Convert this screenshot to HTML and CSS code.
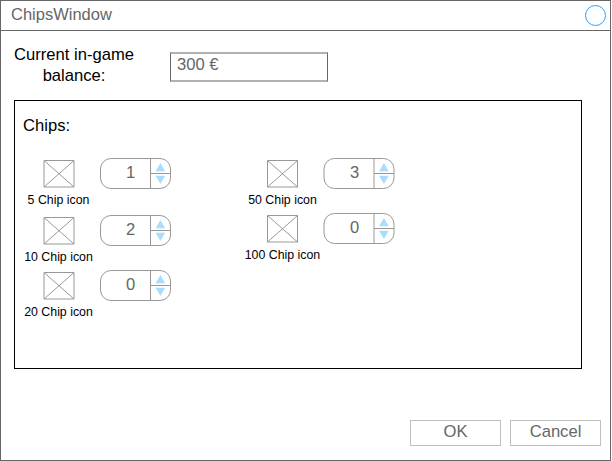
FILE: index.html
```html
<!DOCTYPE html>
<html lang="en">
<head>
<meta charset="utf-8">
<title>ChipsWindow</title>
<link rel="stylesheet" href="styles.css">
</head>
<body>
<svg class="defs" aria-hidden="true">
  <defs>
    <path id="image" d="M1 .5h30v26.500h-30zM1 .5l30 26.500M31 .5L1 27" fill="none" stroke="#999"/>
    <g id="frame">
      <rect x=".5" y=".5" width="70" height="30" rx="10.500" fill="#fff" stroke="#999"/>
      <path d="M50.500 .5v30M50.500 15.500h20" fill="none" stroke="#999"/>
      <path d="M60.400 5l4.800 8.300h-9.600zM60.400 26l4.800-8.300h-9.600z" fill="#aadcff"/>
    </g>
  </defs>
</svg>
<main class="window">
  <header class="titlebar">
    <h1 class="title">ChipsWindow</h1>
    <span class="close"></span>
  </header>
  <section class="balance">
    <label class="balance-label">Current in-game balance:</label>
    <div class="balance-field">300 €</div>
  </section>
  <section class="panel">
    <h2 class="heading">Chips:</h2>
    <div class="columns">
      <div class="column">
        <div class="chip first">
          <div class="picture"><svg class="image"><use href="#image"/></svg><span class="caption">5 Chip icon</span></div>
          <div class="spinner"><svg class="frame"><use href="#frame"/></svg><span class="value">1</span></div>
        </div>
        <div class="chip">
          <div class="picture"><svg class="image"><use href="#image"/></svg><span class="caption">10 Chip icon</span></div>
          <div class="spinner"><svg class="frame"><use href="#frame"/></svg><span class="value">2</span></div>
        </div>
        <div class="chip">
          <div class="picture"><svg class="image"><use href="#image"/></svg><span class="caption">20 Chip icon</span></div>
          <div class="spinner"><svg class="frame"><use href="#frame"/></svg><span class="value">0</span></div>
        </div>
      </div>
      <div class="column">
        <div class="chip">
          <div class="picture"><svg class="image"><use href="#image" x="-.5"/></svg><span class="caption">50 Chip icon</span></div>
          <div class="spinner"><svg class="frame"><use href="#frame" x="-.5"/></svg><span class="value">3</span></div>
        </div>
        <div class="chip">
          <div class="picture"><svg class="image"><use href="#image" x="-.5"/></svg><span class="caption">100 Chip icon</span></div>
          <div class="spinner"><svg class="frame"><use href="#frame" x="-.5"/></svg><span class="value">0</span></div>
        </div>
      </div>
    </div>
  </section>
  <footer class="actions">
    <button class="button">OK</button>
    <button class="button">Cancel</button>
  </footer>
</main>
</body>
</html>
```
FILE: styles.css
```css
* { box-sizing: border-box; }
body {
  margin: 0;
  background: #fff;
  color: #000;
  font: 16.600px/21px "Liberation Sans", Arial, sans-serif;
}
.defs {
  display: block;
  width: 0;
  height: 0;
}
.window {
  display: flex;
  flex-direction: column;
  width: 611px;
  height: 461px;
  border: 1px solid #666;
}
.titlebar {
  display: flex;
  justify-content: space-between;
  height: 30px;
  padding: 3px 4px 0 10px;
  border-bottom: 1px solid #666;
}
.title {
  margin: 0;
  font-size: 16.500px;
  font-weight: 400;
  color: #666;
}
.close {
  width: 21px;
  height: 21px;
  margin-top: 1px;
  border: 1px solid #3399ff;
  border-radius: 50%;
}
.balance {
  display: flex;
  height: 69px;
  padding: 13px 0 0 8px;
}
.balance-label {
  width: 130px;
  text-align: center;
}
.balance-field {
  width: 158px;
  height: 30px;
  margin: 8px 0 0 31px;
  padding: 0 6px;
  border: 1px solid #666;
  border-width: 2px 1px;
  border-color: #b2b2b2 #666;
  color: #666;
}
.panel {
  width: 568px;
  height: 269px;
  margin-left: 13px;
  padding: 14px 0 0 5px;
  border: 1px solid #000;
}
.heading {
  margin: 0 0 22px 3px;
  font-size: 16.600px;
  font-weight: 400;
}
.columns { display: flex; }
.column { width: 224px; }
.chip {
  display: flex;
  gap: 2px;
  height: 55px;
}
.first { height: 57px; }
.picture {
  display: flex;
  flex-direction: column;
  align-items: center;
  width: 78px;
  padding-top: 2px;
}
.image {
  width: 32px;
  height: 28px;
}
.caption {
  margin: 5px 1px 0 0;
  font-size: 12.350px;
  line-height: 15px;
  white-space: nowrap;
}
.spinner {
  display: grid;
  width: 72px;
  height: 32px;
}
.frame, .value { grid-area: 1 / 1; }
.frame {
  width: 72px;
  height: 32px;
  overflow: visible;
}
.value {
  z-index: 1;
  width: 61px;
  padding-top: 4px;
  text-align: center;
  color: #666;
}
.actions {
  display: flex;
  justify-content: flex-end;
  gap: 9px;
  margin-top: 51px;
  padding-right: 9px;
}
.button {
  width: 91px;
  height: 26px;
  padding: 0 0 3px;
  border: 1px solid #c0c0c0;
  background: #fff;
  color: #666;
  font: inherit;
}
```
